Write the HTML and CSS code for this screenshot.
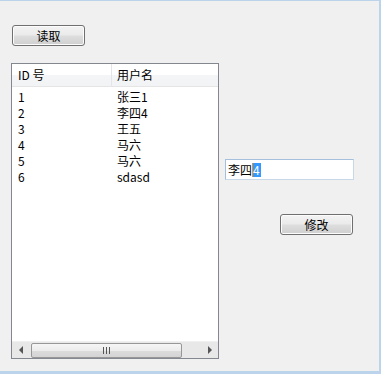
FILE: index.html
```html
<!DOCTYPE html>
<html>
<head>
<meta charset="utf-8">
<link rel="stylesheet" href="styles.css">
</head>
<body>
<div class="window">
  <div class="left">
    <button class="btn btn-read">读取</button>
    <div class="list">
      <div class="header">
        <div class="hcell c1">ID 号</div>
        <div class="hcell c2">用户名</div>
      </div>
      <div class="rows">
        <div class="row"><span class="c1">1</span><span class="c2">张三1</span></div>
        <div class="row"><span class="c1">2</span><span class="c2">李四4</span></div>
        <div class="row"><span class="c1">3</span><span class="c2">王五</span></div>
        <div class="row"><span class="c1">4</span><span class="c2">马六</span></div>
        <div class="row"><span class="c1">5</span><span class="c2">马六</span></div>
        <div class="row"><span class="c1">6</span><span class="c2">sdasd</span></div>
      </div>
      <div class="hscroll">
        <div class="arrow">
          <svg width="5" height="8" viewBox="0 0 5 8"><path d="M4 0 L0 4 L4 8 Z" fill="#555"/></svg>
        </div>
        <div class="track">
          <div class="thumb">
            <svg width="7" height="7" viewBox="0 0 7 7"><path d="M0.5 0 V7 M3.5 0 V7 M6.5 0 V7" stroke="#555" stroke-width="1"/></svg>
          </div>
        </div>
        <div class="arrow">
          <svg width="5" height="8" viewBox="0 0 5 8"><path d="M1 0 L5 4 L1 8 Z" fill="#555"/></svg>
        </div>
      </div>
    </div>
  </div>
  <div class="right">
    <div class="input">李四<span class="caret"></span><span class="sel">4</span></div>
    <button class="btn btn-edit">修改</button>
  </div>
</div>
</body>
</html>
```
FILE: styles.css
```css
html, body {
  margin: 0;
  padding: 0;
  background: #f0f0f0;
}
body {
  font-family: "Noto Sans CJK SC", "Liberation Sans", sans-serif;
  font-size: 12px;
  color: #000;
}
.window {
  box-sizing: border-box;
  width: 381px;
  height: 374px;
  border-top: 1px solid #bcd3ec;
  border-right: 2px solid #bcd3ec;
  border-bottom: 3px solid #bcd3ec;
  background: #f0f0f0;
  display: flex;
  padding-left: 11px;
}
.left {
  display: flex;
  flex-direction: column;
  width: 208px;
}
.btn {
  box-sizing: border-box;
  width: 73px;
  height: 21px;
  border: 1px solid #707070;
  border-radius: 3px;
  background: linear-gradient(#f3f3f3 0%, #ebebeb 45%, #dddddd 55%, #cfcfcf 100%);
  box-shadow: inset 0 0 0 1px #fcfcfc;
  font-family: "Noto Sans CJK SC", sans-serif;
  font-size: 12px;
  line-height: 17px;
  padding: 0;
  color: #000;
}
.btn-read {
  margin-top: 24px;
  margin-left: 1px;
}
.list {
  box-sizing: border-box;
  margin-top: 17px;
  width: 208px;
  height: 296px;
  border: 1px solid #828790;
  background: #fff;
  display: flex;
  flex-direction: column;
}
.header {
  display: flex;
  height: 22px;
  border-bottom: 1px solid #e5e5e5;
  background: linear-gradient(#ffffff 0%, #ffffff 50%, #f4f5f7 51%, #f2f3f5 100%);
}
.hcell {
  line-height: 22px;
}
.hcell.c1 {
  width: 93px;
  padding-left: 6px;
  border-right: 1px solid #e3e5e8;
}
.hcell.c2 {
  padding-left: 5px;
}
.rows {
  flex: 1;
  padding-top: 2px;
}
.row {
  display: flex;
  height: 16px;
  line-height: 16px;
}
.row .c1 {
  width: 99px;
  padding-left: 6px;
  box-sizing: border-box;
  width: 105px;
}
.row .c2 {
  padding-left: 0;
}
.hscroll {
  display: flex;
  height: 17px;
  background: #e8e8e8;
  border-top: 1px solid #f0f0f0;
  box-sizing: border-box;
  align-items: center;
}
.arrow {
  width: 18px;
  height: 16px;
  display: flex;
  align-items: center;
  justify-content: center;
}
.track {
  flex: 1;
  height: 16px;
  display: flex;
  align-items: center;
}
.thumb {
  box-sizing: border-box;
  margin-left: 1px;
  width: 151px;
  height: 15px;
  border: 1px solid #979797;
  border-radius: 2px;
  background: linear-gradient(#f5f5f5 0%, #ececec 50%, #dcdcdc 51%, #d4d4d4 100%);
  display: flex;
  align-items: center;
  justify-content: center;
}
.right {
  display: flex;
  flex-direction: column;
  margin-left: 6px;
  padding-top: 158px;
}
.input {
  box-sizing: border-box;
  width: 129px;
  height: 21px;
  border: 1px solid #abadb3;
  border-top-color: #7f9db9;
  border-color: #a4c0dc #c8d9ea #c8d9ea #a4c0dc;
  background: #fff;
  padding-left: 2px;
  line-height: 19px;
  display: flex;
  align-items: center;
}
.caret {
  display: inline-block;
  width: 1px;
  height: 14px;
  background: #e8902a;
}
.sel {
  display: inline-block;
  background: #3399ff;
  color: #fff;
  height: 14px;
  line-height: 14px;
  padding-right: 1px;
}
.btn-edit {
  margin-top: 34px;
  margin-left: 55px;
}
```
